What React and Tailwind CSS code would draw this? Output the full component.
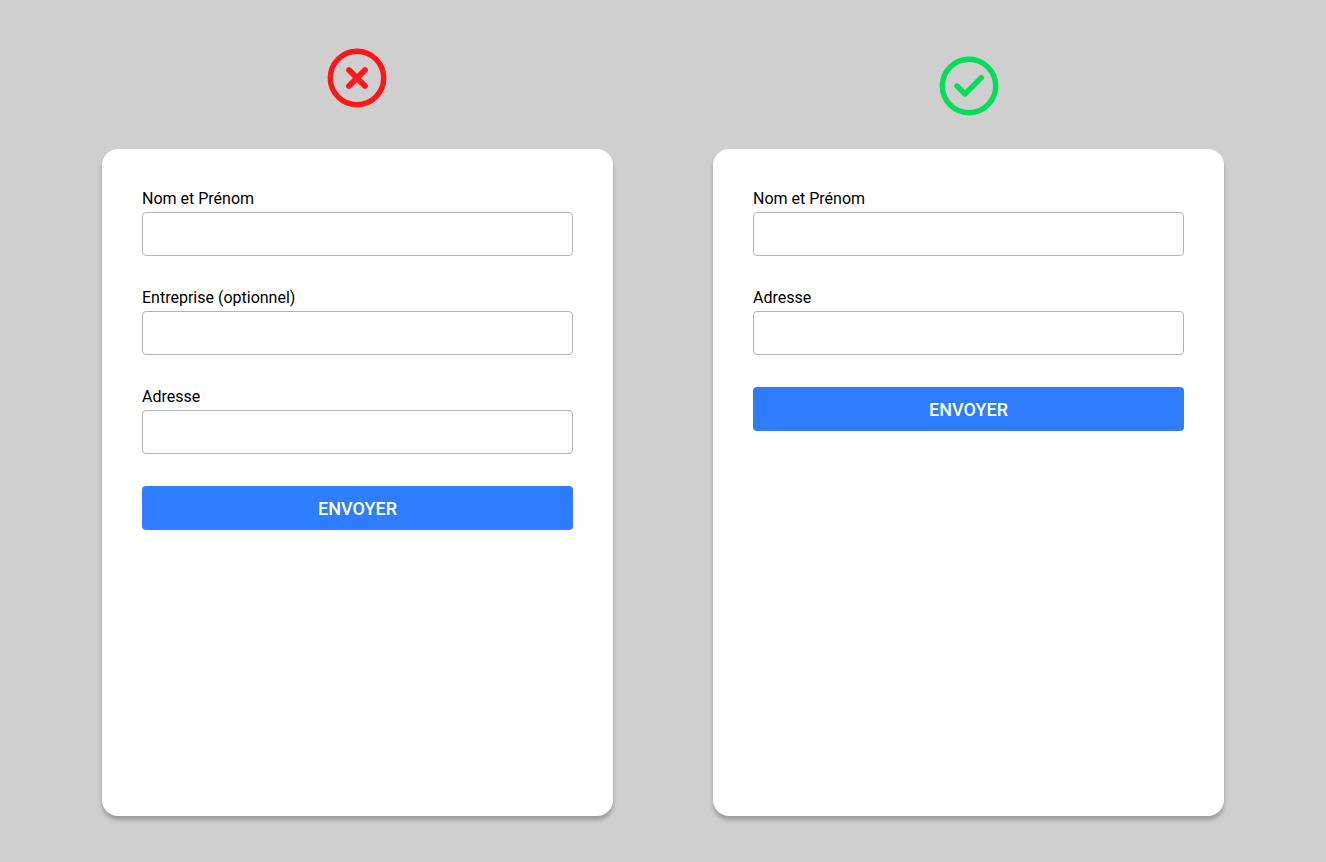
import React from 'react';

const CrossIcon = () => (
    <svg className="mr-px size-16" viewBox="0 0 64 64" fill="none" stroke="#ff1717" strokeWidth="5.4" strokeLinecap="round">
        <circle cx="32" cy="32" r="26.7" />
        <path strokeWidth="5.8" d="M24 24l16 16M40 24L24 40" />
    </svg>
);

const CheckIcon = () => (
    <svg className="size-16" viewBox="0 0 64 64" fill="none" stroke="#00df5a" strokeWidth="5.4" strokeLinecap="round" strokeLinejoin="round">
        <circle cx="32" cy="32" r="26.7" />
        <path d="M20 32l8 8l16.3-16.3" />
    </svg>
);

const Field = ({ id, label }) => (
    <div className="flex flex-col gap-1">
        <label htmlFor={id} className="text-base leading-[19px] text-black">{label}</label>
        <input id={id} type="text" className="h-11 w-full rounded border border-[#b3b3b3] bg-white px-3" />
    </div>
);

const FormCard = ({ name, fields }) => (
    <form className="flex h-[667px] w-full flex-col gap-8 rounded-2xl bg-white p-10 shadow-[0_4px_4px_rgba(0,0,0,0.25)]">
        {fields.map((label, i) => (
            <Field key={label} id={`${name}-${i}`} label={label} />
        ))}
        <button type="button" className="h-11 w-full shrink-0 rounded bg-[#2e7dff] pt-0.5 text-lg font-medium text-white">
            ENVOYER
        </button>
    </form>
);

const App = () => {
    return (
        <div className="flex h-[862px] w-[1326px] justify-center gap-[100px] overflow-hidden bg-[#cfcfcf] font-['Roboto',sans-serif]">
            <section className="flex w-[511px] flex-col items-center gap-[39px] pt-[46px]">
                <CrossIcon />
                <FormCard name="long" fields={['Nom et Prénom', 'Entreprise (optionnel)', 'Adresse']} />
            </section>
            <section className="flex w-[511px] flex-col items-center gap-[31px] pt-[54px]">
                <CheckIcon />
                <FormCard name="short" fields={['Nom et Prénom', 'Adresse']} />
            </section>
        </div>
    );
};

export default App;
